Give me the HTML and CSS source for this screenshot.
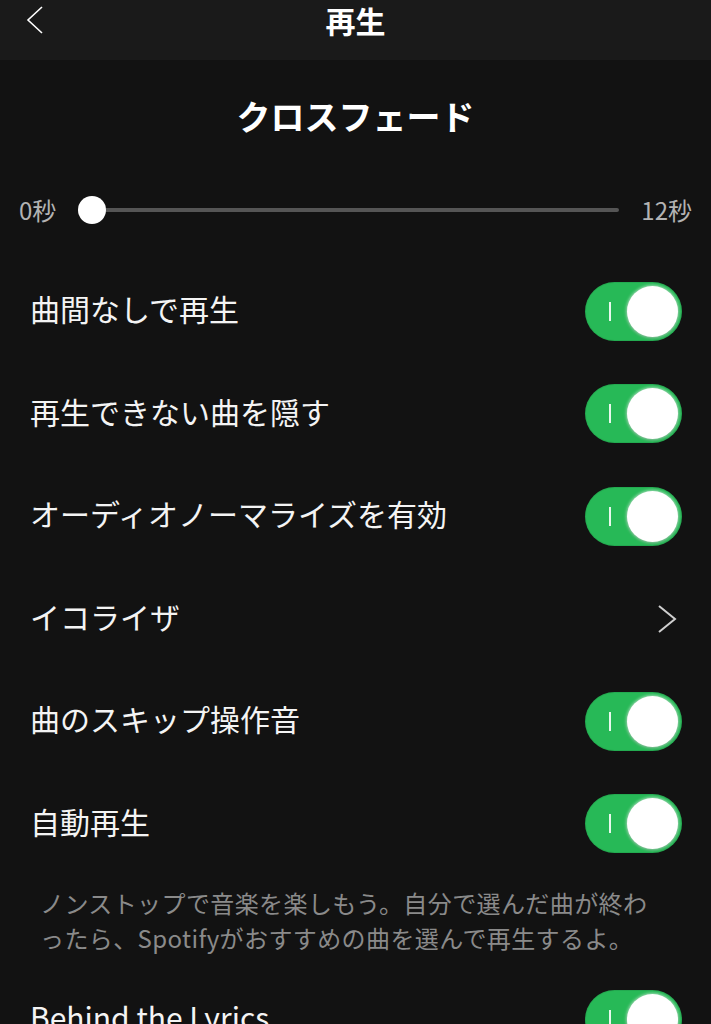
FILE: index.html
```html
<!DOCTYPE html>
<html lang="ja">
<head>
<meta charset="utf-8">
<link rel="stylesheet" href="styles.css">
</head>
<body>
<header class="topbar">
  <svg class="back" width="18" height="28" viewBox="0 0 18 28"><path d="M16 1 L2 14 L16 27" fill="none" stroke="#fff" stroke-width="1.6"/></svg>
  <h1 class="topbar-title">再生</h1>
</header>
<main class="page">
  <h2 class="section-title">クロスフェード</h2>
  <div class="slider">
    <span class="slider-label">0秒</span>
    <div class="slider-track-wrap">
      <div class="slider-track"></div>
      <div class="slider-thumb"></div>
    </div>
    <span class="slider-label">12秒</span>
  </div>
  <ul class="rows">
    <li class="row"><span class="row-label">曲間なしで再生</span><span class="toggle"><span class="toggle-i"></span><span class="toggle-knob"></span></span></li>
    <li class="row"><span class="row-label">再生できない曲を隠す</span><span class="toggle"><span class="toggle-i"></span><span class="toggle-knob"></span></span></li>
    <li class="row"><span class="row-label">オーディオノーマライズを有効</span><span class="toggle"><span class="toggle-i"></span><span class="toggle-knob"></span></span></li>
    <li class="row"><span class="row-label">イコライザ</span><svg class="chev" width="22" height="28" viewBox="0 0 22 28"><path d="M3 1 L19 14 L3 27" fill="none" stroke="#cfcfcf" stroke-width="2"/></svg></li>
    <li class="row"><span class="row-label">曲のスキップ操作音</span><span class="toggle"><span class="toggle-i"></span><span class="toggle-knob"></span></span></li>
    <li class="row"><span class="row-label">自動再生</span><span class="toggle"><span class="toggle-i"></span><span class="toggle-knob"></span></span></li>
  </ul>
  <p class="desc">ノンストップで音楽を楽しもう。自分で選んだ曲が終わったら、Spotifyがおすすめの曲を選んで再生するよ。</p>
  <ul class="rows">
    <li class="row"><span class="row-label">Behind the Lyrics</span><span class="toggle"><span class="toggle-i"></span><span class="toggle-knob"></span></span></li>
  </ul>
</main>
</body>
</html>
```
FILE: styles.css
```css
* { box-sizing: border-box; }
html, body { margin: 0; padding: 0; }
body {
  background: #121212;
  color: #fff;
  font-family: "Noto Sans CJK JP", "Noto Sans", sans-serif;
  width: 711px;
  height: 1024px;
  overflow: hidden;
}
.topbar {
  height: 60px;
  background: #1a1a1a;
  position: relative;
  display: flex;
  justify-content: center;
}
.back {
  position: absolute;
  left: 26px;
  top: 6px;
}
.topbar-title {
  margin: 0;
  font-size: 30px;
  font-weight: 700;
  line-height: 40px;
}
.page { display: flex; flex-direction: column; }
.section-title {
  margin: 0;
  height: 110px;
  display: flex;
  align-items: center;
  justify-content: center;
  font-size: 34px;
  font-weight: 700;
}
.slider {
  height: 80px;
  display: flex;
  align-items: center;
  padding: 0 19px 0 19px;
  margin-bottom: 10px;
}
.slider-label {
  font-size: 24px;
  color: #b3b3b3;
  line-height: 1;
}
.slider-track-wrap {
  flex: 1;
  position: relative;
  height: 28px;
  margin: 0 22px 0 22px;
}
.slider-track {
  position: absolute;
  left: 14px;
  right: 0;
  top: 12px;
  height: 4px;
  border-radius: 2px;
  background: #555;
}
.slider-thumb {
  position: absolute;
  left: 0;
  top: 0;
  width: 28px;
  height: 28px;
  border-radius: 50%;
  background: #fff;
}
.rows { list-style: none; margin: 0; padding: 0; }
.row {
  height: 102.5px;
  display: flex;
  align-items: center;
  justify-content: space-between;
  padding: 0 29px 0 30px;
}
.row-label {
  font-size: 30px;
  color: #f4f4f4;
  line-height: 1;
  padding-bottom: 6px;
}
.toggle {
  position: relative;
  width: 97px;
  height: 59px;
  border-radius: 30px;
  background: #27b957;
  box-shadow: inset 0 0 0 1px rgba(0,0,0,0.08);
}
.toggle-i {
  position: absolute;
  left: 24px;
  top: 20px;
  width: 2px;
  height: 19px;
  background: #e8f8ec;
}
.toggle-knob {
  position: absolute;
  right: 4px;
  top: 4px;
  width: 51px;
  height: 51px;
  border-radius: 50%;
  background: #fff;
  box-shadow: 0 0 3px 1px rgba(255,255,255,0.55), 0 1px 3px rgba(0,0,0,0.25);
}
.chev { margin-right: 4px; }
.desc {
  margin: 10px 0 13px 0;
  padding: 0 40px 0 40px;
  width: 711px;
  font-size: 24px;
  letter-spacing: 0.4px;
  line-height: 35px;
  color: #8a8a8a;
  line-break: loose;
}
```
